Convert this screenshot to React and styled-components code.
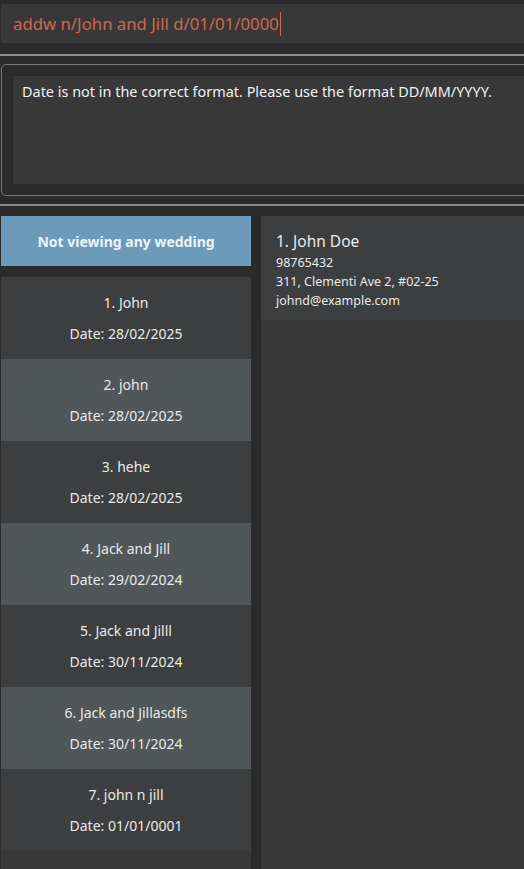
import React from "react";
import styled, { createGlobalStyle } from "styled-components";

const Global = createGlobalStyle`
  html, body { margin: 0; padding: 0; background: #2b2b2b; }
  body { width: 524px; height: 869px; overflow: hidden; font-family: "Noto Sans", "Open Sans", sans-serif; }
  * { box-sizing: border-box; }
`;

const Page = styled.div`
  width: 524px;
  height: 869px;
  display: flex;
  flex-direction: column;
  background: #2b2b2b;
  overflow: hidden;
`;

const CommandBox = styled.div`
  margin: 4px 0 0 1px;
  height: 39px;
  background: #383838;
  display: flex;
  align-items: center;
  padding-left: 12px;
  color: #d06651;
  font-size: 16.75px;
  white-space: nowrap;
`;

const Caret = styled.span`
  display: inline-block;
  width: 1px;
  height: 24px;
  background: #d06651;
  margin-left: 1px;
`;

const Separator = styled.div`
  height: 2px;
  background: #8b8b8b;
  margin-top: ${(p) => p.$top}px;
  flex-shrink: 0;
`;

const ResultFrame = styled.div`
  margin: 8px -20px 0 1px;
  height: 132px;
  border: 1px solid #7a7a7a;
  border-radius: 5px;
  padding: 11px;
  flex-shrink: 0;
`;

const ResultArea = styled.div`
  height: 108px;
  background: #383838;
  color: #f2f2f2;
  font-size: 14.45px;
  padding: 6px 9px;
  white-space: nowrap;
`;

const Main = styled.div`
  flex: 1;
  margin-top: 10px;
  display: flex;
  gap: 10px;
  padding-left: 1px;
  min-height: 0;
`;

const LeftColumn = styled.div`
  width: 250px;
  display: flex;
  flex-direction: column;
  gap: 11px;
`;

const Header = styled.div`
  height: 50px;
  background: #6b9abb;
  color: #eef3f8;
  font-weight: 700;
  font-size: 14px;
  display: flex;
  align-items: center;
  justify-content: center;
`;

const WeddingList = styled.div`
  flex: 1;
  background: #383838;
`;

const WeddingCard = styled.div`
  height: 82px;
  background: ${(p) => (p.$odd ? "#515658" : "#3c3e3f")};
  color: #eaeaea;
  font-size: 14px;
  display: flex;
  flex-direction: column;
  align-items: center;
  justify-content: center;
  gap: 11px;
  line-height: 20px;
`;

const RightColumn = styled.div`
  flex: 1;
  background: #383838;
`;

const PersonCard = styled.div`
  height: 104px;
  background: #3c3e3f;
  padding: 14px 15px;
  color: #eaeaea;
  display: flex;
  flex-direction: column;
`;

const PersonName = styled.div`
  font-size: 15.5px;
  line-height: 22px;
  margin-bottom: 1px;
`;

const PersonDetail = styled.div`
  font-size: 12.5px;
  line-height: 19px;
`;

const weddings = [
  ["1. John", "28/02/2025"],
  ["2. john", "28/02/2025"],
  ["3. hehe", "28/02/2025"],
  ["4. Jack and Jill", "29/02/2024"],
  ["5. Jack and Jilll", "30/11/2024"],
  ["6. Jack and Jillasdfs", "30/11/2024"],
  ["7. john n jill", "01/01/0001"],
];

export default function App() {
  return (
    <Page>
      <Global />
      <CommandBox>
        addw n/John and Jill d/01/01/0000
        <Caret />
      </CommandBox>
      <Separator $top={11} />
      <ResultFrame>
        <ResultArea>
          Date is not in the correct format. Please use the format DD/MM/YYYY.
        </ResultArea>
      </ResultFrame>
      <Separator $top={8} />
      <Main>
        <LeftColumn>
          <Header>Not viewing any wedding</Header>
          <WeddingList>
            {weddings.map(([name, date], i) => (
              <WeddingCard key={name} $odd={i % 2 === 1}>
                <div>{name}</div>
                <div>Date: {date}</div>
              </WeddingCard>
            ))}
          </WeddingList>
        </LeftColumn>
        <RightColumn>
          <PersonCard>
            <PersonName>1. John Doe</PersonName>
            <PersonDetail>98765432</PersonDetail>
            <PersonDetail>311, Clementi Ave 2, #02-25</PersonDetail>
            <PersonDetail>johnd@example.com</PersonDetail>
          </PersonCard>
        </RightColumn>
      </Main>
    </Page>
  );
}
